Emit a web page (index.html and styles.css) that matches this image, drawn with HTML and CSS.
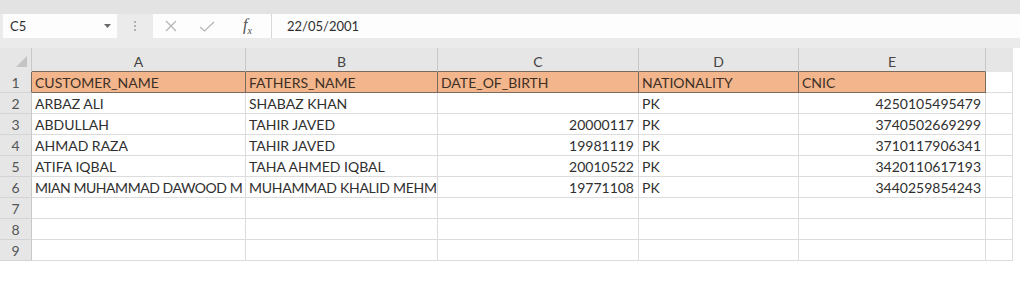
FILE: index.html
```html
<!DOCTYPE html>
<html>
<head>
    <meta charset="utf-8">
    <link rel="stylesheet" href="styles.css">
</head>
<body>
    <div class="sheet">
        <div class="strip"></div>
        <div class="fbar">
            <div class="namebox">
                <span>C5</span>
                <svg class="drop" width="7" height="4" viewBox="0 0 7 4"><path d="M0 0h7L3.5 4z" fill="#6a6a6a"/></svg>
            </div>
            <div class="grip">
                <i></i><i></i><i></i>
            </div>
            <div class="tools">
                <svg width="12" height="12" viewBox="0 0 12 12"><path d="M1 1l10 10M11 1L1 11" stroke="#b4b4b4" stroke-width="1.2" fill="none"/></svg>
                <svg width="16" height="11" viewBox="0 0 16 11"><path d="M1 6l4.5 4L15 1" stroke="#b4b4b4" stroke-width="1.2" fill="none"/></svg>
                <span class="fx">f<sub>x</sub></span>
            </div>
            <div class="input">22/05/2001</div>
        </div>
        <div class="gap"></div>

        <div class="grid">
            <div class="hd corner"><span class="tri"></span></div>
            <div class="hd col">A</div>
            <div class="hd col">B</div>
            <div class="hd col">C</div>
            <div class="hd col">D</div>
            <div class="hd col">E</div>
            <div class="hd colf"></div>

            <div class="rn first">1</div>
            <div class="c title">CUSTOMER_NAME</div>
            <div class="c title">FATHERS_NAME</div>
            <div class="c title">DATE_OF_BIRTH</div>
            <div class="c title">NATIONALITY</div>
            <div class="c title">CNIC</div>
            <div class="c"></div>

            <div class="rn">2</div>
            <div class="c">ARBAZ ALI</div>
            <div class="c">SHABAZ KHAN</div>
            <div class="c num"></div>
            <div class="c">PK</div>
            <div class="c num">4250105495479</div>
            <div class="c"></div>

            <div class="rn">3</div>
            <div class="c">ABDULLAH</div>
            <div class="c">TAHIR JAVED</div>
            <div class="c num">20000117</div>
            <div class="c">PK</div>
            <div class="c num">3740502669299</div>
            <div class="c"></div>

            <div class="rn">4</div>
            <div class="c">AHMAD RAZA</div>
            <div class="c">TAHIR JAVED</div>
            <div class="c num">19981119</div>
            <div class="c">PK</div>
            <div class="c num">3710117906341</div>
            <div class="c"></div>

            <div class="rn">5</div>
            <div class="c">ATIFA IQBAL</div>
            <div class="c">TAHA AHMED IQBAL</div>
            <div class="c num">20010522</div>
            <div class="c">PK</div>
            <div class="c num">3420110617193</div>
            <div class="c"></div>

            <div class="rn">6</div>
            <div class="c tight">MIAN MUHAMMAD DAWOOD M</div>
            <div class="c tighter">MUHAMMAD KHALID MEHM</div>
            <div class="c num">19771108</div>
            <div class="c">PK</div>
            <div class="c num">3440259854243</div>
            <div class="c"></div>

            <div class="rn">7</div>
            <div class="c"></div><div class="c"></div><div class="c"></div><div class="c"></div><div class="c"></div><div class="c"></div>

            <div class="rn">8</div>
            <div class="c"></div><div class="c"></div><div class="c"></div><div class="c"></div><div class="c"></div><div class="c"></div>

            <div class="rn">9</div>
            <div class="c"></div><div class="c"></div><div class="c"></div><div class="c"></div><div class="c"></div><div class="c"></div>
        </div>
    </div>
</body>
</html>
```

FILE: styles.css
```css
html,
body {
    margin: 0;
    background: #ffffff;
    font-family: Lato, "Open Sans", sans-serif;
    color: #2f2f2f;
}

.sheet {
    width: 1020px;
}

.strip {
    height: 14px;
    background: #e3e3e3;
}

.fbar {
    height: 24px;
    display: flex;
    background: #ebebeb;
}

.namebox {
    width: 114px;
    margin-left: 3px;
    background: #fdfdfd;
    display: flex;
    align-items: center;
    justify-content: space-between;
    padding: 0 6px 0 7px;
    box-sizing: border-box;
    font-size: 13px;
}

.grip {
    width: 36px;
    display: flex;
    flex-direction: column;
    align-items: center;
    justify-content: center;
    gap: 2px;
}

.grip i {
    width: 2px;
    height: 2px;
    background: #b0b0b0;
}

.tools {
    width: 119px;
    background: #fdfdfd;
    display: flex;
    align-items: center;
    padding-left: 12px;
    gap: 22px;
    box-sizing: border-box;
    border-right: 1px solid #d8d8d8;
}

.fx {
    font-family: "Liberation Serif", serif;
    font-style: italic;
    font-size: 16px;
    color: #4f4f4f;
    margin-left: 6px;
}

.fx sub {
    font-size: 10px;
}

.input {
    flex: 1;
    background: #fdfdfd;
    display: flex;
    align-items: center;
    padding-left: 15px;
    font-size: 13px;
}

.gap {
    height: 10px;
    background: #ebebeb;
}

.grid {
    width: 1013px;
    display: grid;
    grid-template-columns: 32px 214px 192px 201px 160px 187px 27px;
    grid-template-rows: 24px repeat(9, 21px);
    font-size: 14px;
}

.hd {
    background: #e6e6e6;
    border-right: 1px solid #c8c8c8;
    display: flex;
    align-items: center;
    justify-content: center;
    padding-top: 3px;
    box-sizing: border-box;
    color: #444444;
    font-size: 14px;
}

.hd.col {
    border-bottom: 1px solid #7b6b5f;
}

.hd.colf {
    border-right: none;
}

.corner {
    position: relative;
}

.tri {
    position: absolute;
    right: 4px;
    bottom: 5px;
    width: 0;
    height: 0;
    border-left: 11px solid transparent;
    border-bottom: 11px solid #c4c4c4;
}

.rn {
    background: #e6e6e6;
    border-right: 1px solid #c8c8c8;
    border-bottom: 1px solid #d4d4d4;
    display: flex;
    align-items: center;
    justify-content: center;
    box-sizing: border-box;
    color: #555555;
}

.rn.first {
    border-right-color: #7b6b5f;
}

.c {
    border-right: 1px solid #dcdcdc;
    border-bottom: 1px solid #dcdcdc;
    box-sizing: border-box;
    padding: 0 4px 0 3px;
    display: flex;
    align-items: center;
    white-space: nowrap;
    overflow: hidden;
}

.c.num {
    justify-content: flex-end;
}

.c.tight {
    padding-right: 0;
    letter-spacing: -0.45px;
}

.c.tighter {
    padding-right: 0;
    letter-spacing: -0.25px;
}

.c.title {
    background: #f3b58b;
    border-right-color: #7b6b5f;
    border-bottom-color: #7b6b5f;
    color: #3d3026;
}
```
